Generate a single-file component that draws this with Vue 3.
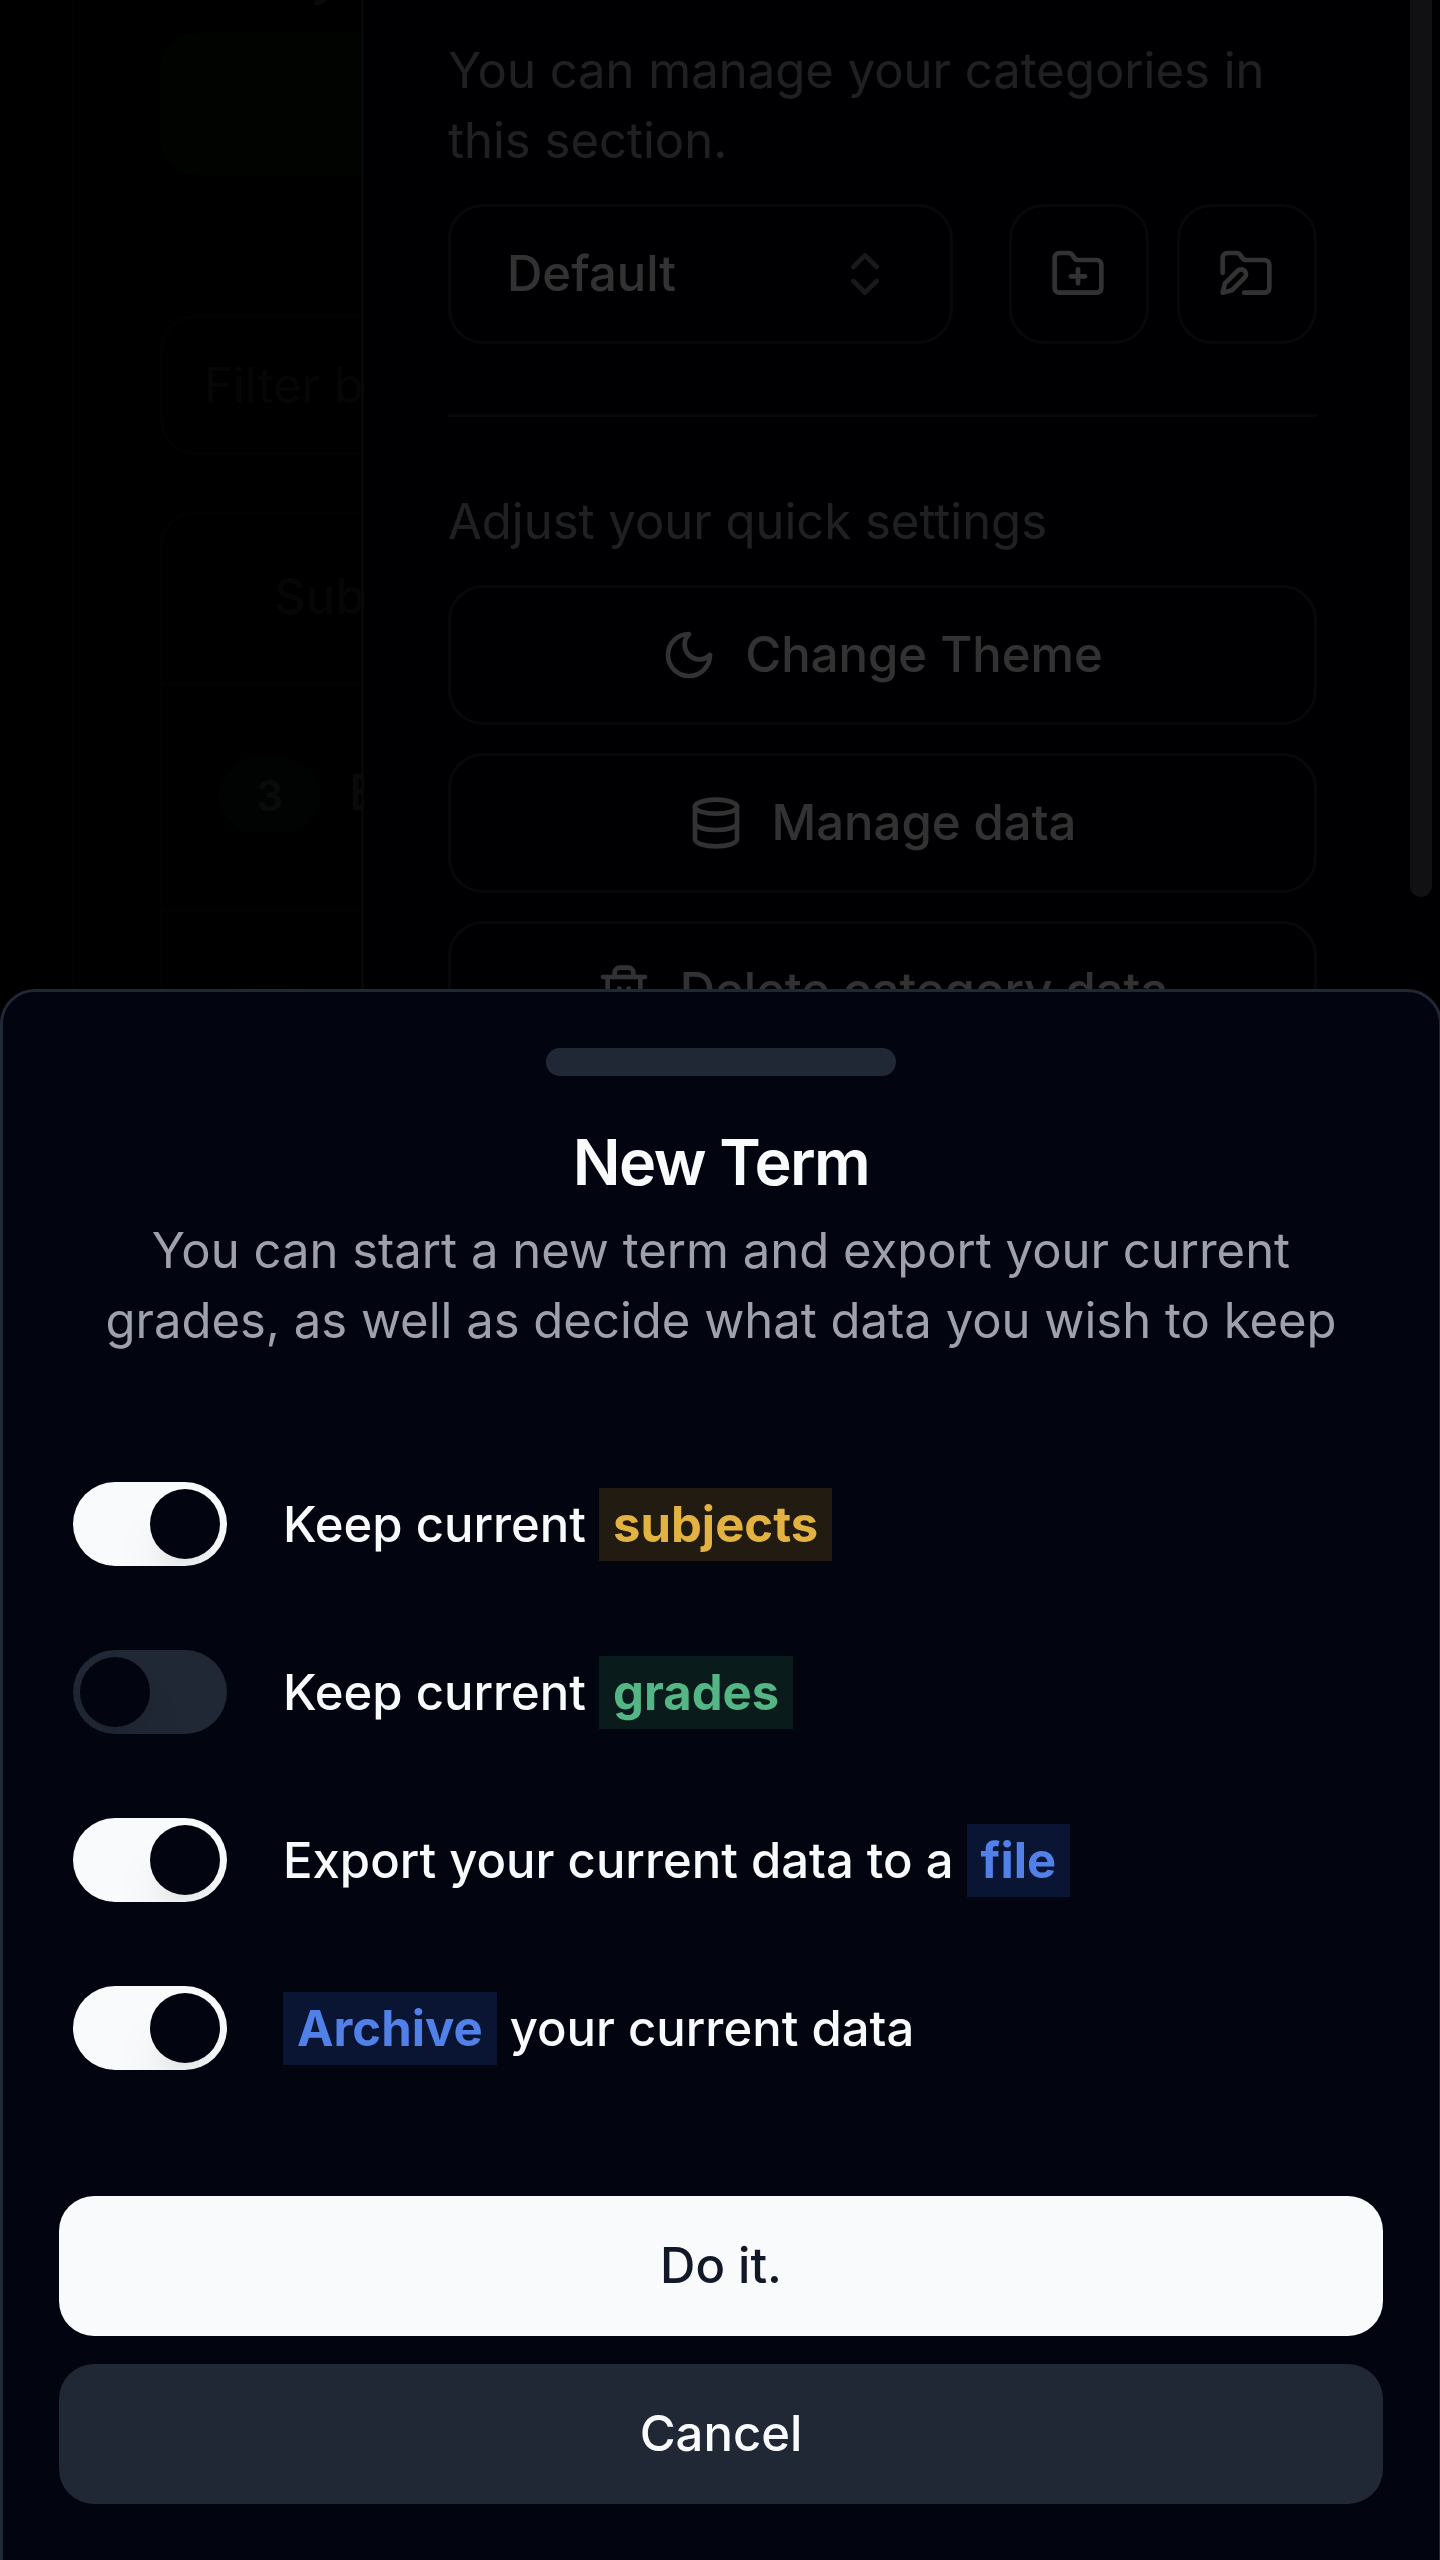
<script setup>
const actions = [
  { id: 'theme', label: 'Change Theme' },
  { id: 'data', label: 'Manage data' },
  { id: 'trash', label: 'Delete category data' }
]

const options = [
  { id: 'subjects', on: true, before: 'Keep current ', mark: 'subjects', tone: 'amber', after: '' },
  { id: 'grades', on: false, before: 'Keep current ', mark: 'grades', tone: 'green', after: '' },
  { id: 'file', on: true, before: 'Export your current data to a ', mark: 'file', tone: 'blue', after: '' },
  { id: 'archive', on: true, before: '', mark: 'Archive', tone: 'blue', after: ' your current data' }
]
</script>

<template>
  <div class="screen">
    <!-- Grade overview page -->
    <main class="page">
      <div class="page-card">
        <p class="page-caption">y</p>
        <div class="page-banner"></div>
        <div class="page-filter">Filter by</div>
        <div class="table">
          <div class="table-head">Subject</div>
          <div class="table-row"><span class="count">3</span><span>E</span></div>
          <div class="table-row"><span class="count"></span></div>
        </div>
      </div>
    </main>
    <div class="overlay"></div>

    <!-- Settings drawer -->
    <aside class="drawer">
      <p class="muted">You can manage your categories in<br />this section.</p>
      <div class="category">
        <button class="outline select">
          <span>Default</span>
          <svg class="icon faded" viewBox="0 0 24 24"><path d="m7 15 5 5 5-5" /><path d="m7 9 5-5 5 5" /></svg>
        </button>
        <div class="category-tools">
          <button class="outline square">
            <svg class="icon" viewBox="0 0 24 24">
              <path d="M12 10v6" /><path d="M9 13h6" />
              <path d="M20 20a2 2 0 0 0 2-2V8a2 2 0 0 0-2-2h-7.9a2 2 0 0 1-1.69-.9L9.6 3.9A2 2 0 0 0 7.93 3H4a2 2 0 0 0-2 2v13a2 2 0 0 0 2 2Z" />
            </svg>
          </button>
          <button class="outline square">
            <svg class="icon" viewBox="0 0 24 24">
              <path d="M8.42 10.61a2.1 2.1 0 1 1 2.97 2.97L5.95 19 2 20l.99-3.95 5.43-5.44Z" />
              <path d="M2 11.5V5a2 2 0 0 1 2-2h3.93a2 2 0 0 1 1.66.9l.82 1.2a2 2 0 0 0 1.66.9H20a2 2 0 0 1 2 2v10a2 2 0 0 1-2 2h-8.8" />
            </svg>
          </button>
        </div>
      </div>
      <hr class="divider" />
      <p class="muted">Adjust your quick settings</p>
      <div class="actions">
        <button v-for="a in actions" :key="a.id" class="outline action">
          <svg class="icon" viewBox="0 0 24 24">
            <path v-if="a.id === 'theme'" d="M12 3a6 6 0 0 0 9 9 9 9 0 1 1-9-9Z" />
            <g v-else-if="a.id === 'data'">
              <ellipse cx="12" cy="5" rx="9" ry="3" />
              <path d="M3 5v14a9 3 0 0 0 18 0V5" />
              <path d="M3 12a9 3 0 0 0 18 0" />
            </g>
            <g v-else>
              <path d="M3 6h18" />
              <path d="M19 6v14c0 1-1 2-2 2H7c-1 0-2-1-2-2V6" />
              <path d="M8 6V4c0-1 1-2 2-2h4c1 0 2 1 2 2v2" />
              <path d="M10 11v6" /><path d="M14 11v6" />
            </g>
          </svg>
          <span>{{ a.label }}</span>
        </button>
      </div>
    </aside>
    <div class="overlay"></div>
    <div class="scrollbar"></div>

    <!-- New term sheet -->
    <section class="sheet">
      <div class="handle"></div>
      <header class="sheet-header">
        <h2>New Term</h2>
        <p>You can start a new term and export your current<br />grades, as well as decide what data you wish to keep</p>
      </header>
      <div class="options">
        <label v-for="o in options" :key="o.id" class="option">
          <span class="switch" :class="{ on: o.on }"><span class="thumb"></span></span>
          <span class="option-text">{{ o.before }}<b :class="o.tone">{{ o.mark }}</b>{{ o.after }}</span>
        </label>
      </div>
      <footer class="sheet-footer">
        <button class="btn primary">Do it.</button>
        <button class="btn secondary">Cancel</button>
      </footer>
    </section>
  </div>
</template>

<style>
body {
  margin: 0;
  background: #000;
}
</style>

<style scoped>
.screen {
  position: relative;
  width: 1440px;
  height: 2560px;
  overflow: hidden;
  background: #000;
  color: #f9fafc;
  font: 400 49px/70px Inter, sans-serif;
}
.screen * {
  box-sizing: border-box;
}
p,
h2 {
  margin: 0;
}
button {
  margin: 0;
  padding: 0;
  border: 0;
  background: none;
  color: inherit;
  font: inherit;
  font-weight: 500;
}

.overlay {
  position: absolute;
  inset: 0;
  background: rgba(0, 0, 0, 0.8);
}

/* page */
.page {
  height: 100%;
  padding-left: 72px;
  background: #02040f;
}
.page-card {
  height: 100%;
  padding-left: 85px;
  border-left: 3px solid #3c4450;
  overflow: hidden;
}
.page-caption {
  height: 33px;
  padding-left: 151px;
  line-height: 70px;
  margin-top: -57px;
  margin-bottom: 57px;
  font-weight: 500;
}
.page-banner {
  height: 142px;
  border-radius: 35px;
  background: #1a4a30;
}
.page-filter {
  height: 140px;
  margin-top: 140px;
  padding: 33px 41px;
  border: 3px solid #3c4450;
  border-radius: 35px;
  color: #9ca3af;
}
.table {
  height: 1400px;
  margin-top: 56px;
  border: 3px solid #3c4450;
  border-radius: 35px;
}
.table-head {
  height: 171px;
  padding: 48px 0 0 111px;
  border-bottom: 3px solid #3c4450;
  color: #9ca3af;
  font-weight: 500;
}
.table-row {
  display: flex;
  align-items: flex-start;
  gap: 28px;
  height: 227px;
  padding: 73px 0 0 55px;
  border-bottom: 3px solid #3c4450;
  font-weight: 500;
}
.count {
  width: 103px;
  height: 75px;
  border-radius: 38px;
  background: #0a5032;
  font-size: 42px;
  font-weight: 600;
  line-height: 75px;
  text-align: center;
}

/* drawer */
.drawer {
  position: absolute;
  top: 0;
  left: 361px;
  width: 1081px;
  height: 2560px;
  padding: 36px 125px 0 84px;
  border-left: 3px solid #212835;
  background: #02040f;
}
.muted {
  color: #9da1ac;
}
.outline {
  border: 3px solid #212835;
  border-radius: 35px;
}
.icon {
  display: block;
  width: 56px;
  height: 56px;
  fill: none;
  stroke: currentColor;
  stroke-width: 2;
  stroke-linecap: round;
  stroke-linejoin: round;
}
.faded {
  opacity: 0.5;
}
.category {
  display: flex;
  justify-content: space-between;
  margin-top: 28px;
}
.select {
  display: flex;
  align-items: center;
  justify-content: space-between;
  width: 505px;
  height: 140px;
  padding: 0 57px 0 56px;
}
.category-tools {
  display: flex;
  gap: 28px;
}
.square {
  display: flex;
  align-items: center;
  justify-content: center;
  width: 140px;
  height: 140px;
  padding-right: 2px;
}
.divider {
  height: 3px;
  margin: 70px 0;
  border: 0;
  background: #212835;
}
.actions {
  display: flex;
  flex-direction: column;
  gap: 28px;
  margin-top: 28px;
}
.action {
  display: flex;
  align-items: center;
  justify-content: center;
  gap: 28px;
  height: 140px;
  padding-right: 1px;
}
.scrollbar {
  position: absolute;
  top: -20px;
  left: 1410px;
  width: 22px;
  height: 917px;
  border-radius: 11px;
  background: #111113;
}

/* sheet */
.sheet {
  position: absolute;
  top: 989px;
  left: 0;
  width: 1442px;
  height: 1580px;
  padding: 56px;
  border: 3px solid #212835;
  border-radius: 35px 35px 0 0;
  background: #02040f;
}
.handle {
  width: 350px;
  height: 28px;
  margin: 0 auto;
  border-radius: 14px;
  background: #212835;
}
.sheet-header {
  margin-top: 55px;
  text-align: center;
}
.sheet-header h2 {
  font-size: 63px;
  font-weight: 600;
  line-height: 63px;
  letter-spacing: -0.025em;
}
.sheet-header p {
  margin: 22px -40px 0;
  color: #9da1ac;
}
.options {
  display: flex;
  flex-direction: column;
  gap: 84px;
  padding: 126px 14px;
}
.option {
  display: flex;
  align-items: center;
  gap: 56px;
  height: 84px;
  font-weight: 500;
}
.switch {
  display: flex;
  width: 154px;
  height: 84px;
  padding: 7px;
  border-radius: 42px;
  background: #212835;
  overflow: hidden;
}
.thumb {
  width: 70px;
  height: 70px;
  border-radius: 50%;
  background: #02040f;
  box-shadow: 0 35px 52px -10px rgba(0, 0, 0, 0.1), 0 14px 21px -14px rgba(0, 0, 0, 0.1);
}
.switch.on {
  justify-content: flex-end;
  background: #f9fafc;
}
.option-text {
  padding-top: 2px;
  white-space: pre;
}
.option-text b {
  padding: 7px 14px;
  font-weight: 700;
}
.amber {
  background: #221b11;
  color: #e3b341;
}
.green {
  background: #091b1b;
  color: #54b585;
}
.blue {
  background: #0a1433;
  color: #5181e8;
}
.sheet-footer {
  display: flex;
  flex-direction: column;
  gap: 28px;
}
.btn {
  height: 140px;
  border-radius: 35px;
}
.primary {
  background: #f9fafc;
  color: #111827;
}
.secondary {
  background: #212835;
}
</style>
